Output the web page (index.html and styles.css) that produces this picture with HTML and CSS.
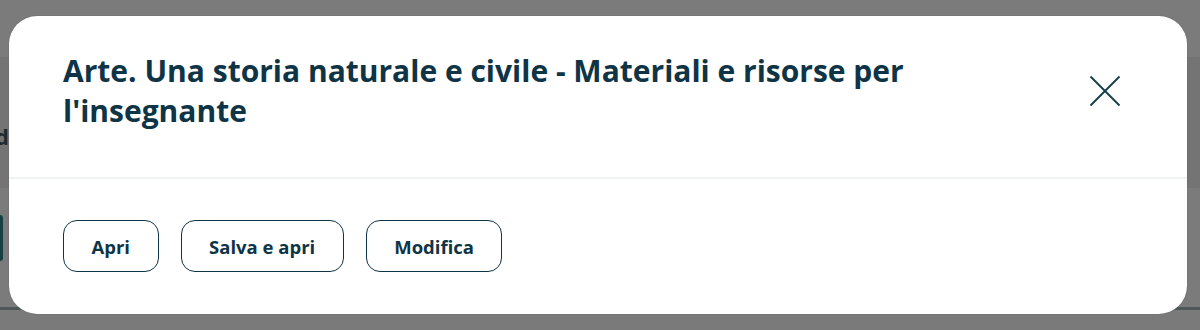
FILE: index.html
```html
<!DOCTYPE html>
<html lang="it">
<head>
    <meta charset="UTF-8">
    <meta name="viewport" content="width=device-width, initial-scale=1.0">
    <title>Materiali e risorse</title>
    <link rel="stylesheet" href="styles.css">
</head>
<body>
    <div class="page">
        <div class="page-top"></div>
        <div class="page-band">
            <span class="page-word">d</span>
        </div>
        <div class="page-lower">
            <div class="page-btn"></div>
        </div>
        <div class="page-line"></div>
    </div>

    <div class="modal">
        <div class="modal-header">
            <h2 class="modal-title">Arte. Una storia naturale e civile - Materiali e risorse per l'insegnante</h2>
            <button class="close-btn" aria-label="Chiudi">
                <svg class="icon-close" viewBox="0 0 32 32" fill="none" stroke="currentColor" stroke-width="2">
                    <line x1="1.5" y1="1.5" x2="30.5" y2="30.5"></line>
                    <line x1="30.5" y1="1.5" x2="1.5" y2="30.5"></line>
                </svg>
            </button>
        </div>
        <div class="modal-actions">
            <button class="action-btn">Apri</button>
            <button class="action-btn">Salva e apri</button>
            <button class="action-btn">Modifica</button>
        </div>
    </div>
</body>
</html>
```

FILE: styles.css
```css
* {
    margin: 0;
    padding: 0;
    box-sizing: border-box;
}

body {
    font-family: 'Open Sans', Lato, sans-serif;
    background: #7a7a7a;
    width: 1200px;
    height: 330px;
    overflow: hidden;
    position: relative;
}

.page {
    display: flex;
    flex-direction: column;
}

.page-top {
    height: 57px;
    background: #7b7b7b;
}

.page-band {
    height: 131px;
    background: #747474;
    padding-top: 64px;
}

.page-word {
    font-size: 22px;
    font-weight: 700;
    color: #1e2a2e;
    margin-left: -5px;
    display: block;
}

.page-lower {
    height: 119px;
    background: #7b7b7b;
    padding-top: 27px;
}

.page-btn {
    width: 3px;
    height: 46px;
    background: #14403f;
    border-radius: 0 6px 6px 0;
}

.page-line {
    height: 3px;
    background: #4f5858;
}

.modal {
    position: absolute;
    top: 16px;
    left: 9px;
    width: 1178px;
    height: 298px;
    background: #fff;
    border-radius: 28px;
    box-shadow: 0 0 1px rgba(0, 0, 0, 0.4);
    overflow: hidden;
}

.modal-header {
    display: flex;
    align-items: flex-start;
    justify-content: space-between;
    padding: 35px 66px 0 54px;
    height: 163px;
    border-bottom: 2px solid #eef3f3;
}

.modal-title {
    font-size: 30px;
    font-weight: 700;
    line-height: 40px;
    color: #0e3446;
    max-width: 880px;
}

.close-btn {
    background: none;
    border: none;
    color: #163f4f;
    margin-top: 24px;
    cursor: pointer;
    display: flex;
}

.icon-close {
    width: 32px;
    height: 32px;
}

.modal-actions {
    display: flex;
    gap: 22px;
    padding: 41px 54px 0;
}

.action-btn {
    height: 52px;
    padding: 0 27.5px;
    background: #fff;
    border: 1px solid #0e3446;
    border-radius: 14px;
    font-family: inherit;
    font-size: 18.5px;
    font-weight: 700;
    color: #0e3446;
    cursor: pointer;
}
```
